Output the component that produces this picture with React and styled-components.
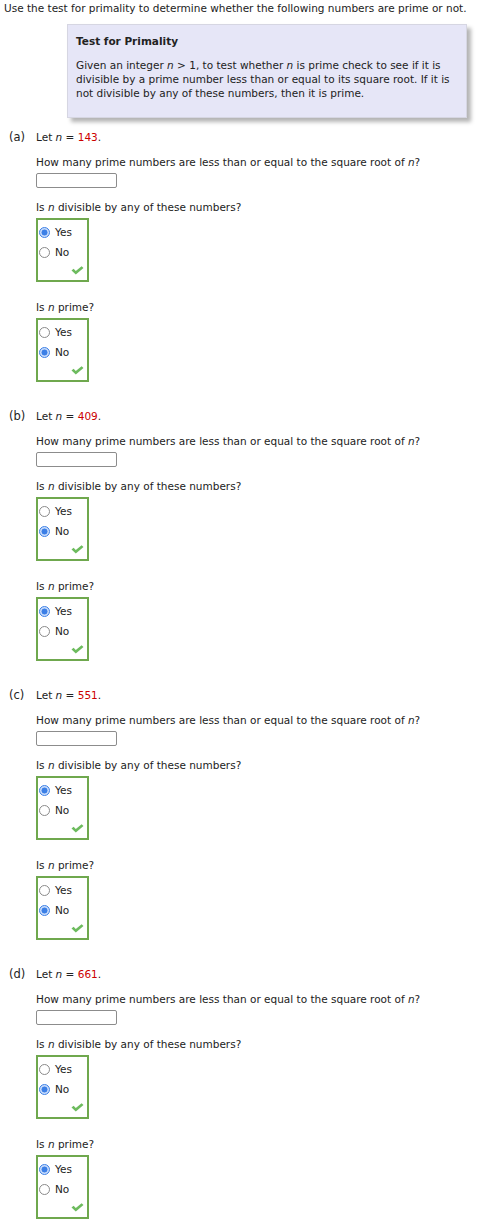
import styled, { createGlobalStyle } from 'styled-components'

const GlobalStyle = createGlobalStyle`
  body {
    margin: 0;
    background: #ffffff;
    color: #222222;
    font-family: 'DejaVu Sans', Verdana, sans-serif;
    font-size: 10.5px;
  }
`

const parts = [
  { label: '(a)', n: 143, divisible: 'Yes', prime: 'No' },
  { label: '(b)', n: 409, divisible: 'No', prime: 'Yes' },
  { label: '(c)', n: 551, divisible: 'Yes', prime: 'No' },
  { label: '(d)', n: 661, divisible: 'No', prime: 'Yes' },
]

const Check = () => (
  <CheckIcon viewBox="0 0 13 9" width="13" height="9">
    <path d="M0.5 4.6 L2.6 2.8 L4.8 5 L10.6 0.3 L12.5 2 L4.8 8.6 Z" fill="#6dbb5e" />
  </CheckIcon>
)

const Choices = ({ value }) => (
  <ChoiceBox>
    {['Yes', 'No'].map((opt) => (
      <Choice key={opt}>
        <Radio $checked={opt === value} />
        {opt}
      </Choice>
    ))}
    <Check />
  </ChoiceBox>
)

const App = () => {
  return (
    <Page>
      <GlobalStyle />
      <Intro>Use the test for primality to determine whether the following numbers are prime or not.</Intro>
      <InfoBox>
        <InfoTitle>Test for Primality</InfoTitle>
        <InfoText>
          Given an integer <Var>n</Var> &gt; 1, to test whether <Var>n</Var> is prime check to see if it is
          divisible by a prime number less than or equal to its square root. If it is not divisible by any
          of these numbers, then it is prime.
        </InfoText>
      </InfoBox>
      {parts.map((p) => (
        <Part key={p.label}>
          <PartLabel>{p.label}</PartLabel>
          <PartBody>
            <Line>
              Let <Var>n</Var> = <Num>{p.n}</Num>.
            </Line>
            <Question $top={11}>
              How many prime numbers are less than or equal to the square root of <Var>n</Var>?
            </Question>
            <Answer />
            <Question $top={12}>
              Is <Var>n</Var> divisible by any of these numbers?
            </Question>
            <Choices value={p.divisible} />
            <Question $top={18}>
              Is <Var>n</Var> prime?
            </Question>
            <Choices value={p.prime} />
          </PartBody>
        </Part>
      ))}
    </Page>
  )
}

export default App

const Page = styled.div`
  padding: 1px 4px 0 4px;
`
const Intro = styled.p`
  margin: 0;
  line-height: 14px;
`
const InfoBox = styled.div`
  margin: 9px 0 0 63px;
  width: 382px;
  background: #e6e6f7;
  border: 1px solid #d6d6e2;
  box-shadow: 4px 4px 4px #b5b5b5;
  padding: 9px 8px 17px 8px;
`
const InfoTitle = styled.div`
  font-weight: bold;
  line-height: 14px;
`
const InfoText = styled.p`
  margin: 10px 0 0 0;
  line-height: 14px;
`
const Var = styled.i`
  font-style: italic;
`
const Num = styled.span`
  color: #cc0000;
`
const Part = styled.div`
  display: grid;
  grid-template-columns: 32px 1fr;
  margin-top: 12px;
  & + & {
    margin-top: 27px;
  }
`
const PartLabel = styled.div`
  padding-left: 5px;
  line-height: 14px;
  font-size: 11.5px;
`
const PartBody = styled.div`
  display: flex;
  flex-direction: column;
  align-items: flex-start;
`
const Line = styled.div`
  line-height: 14px;
`
const Question = styled.div`
  line-height: 14px;
  margin-top: ${(p) => p.$top}px;
`
const Answer = styled.div`
  box-sizing: border-box;
  width: 81px;
  height: 15px;
  margin-top: 4px;
  border: 1px solid #8c8c8c;
  border-radius: 2px;
  background: #ffffff;
`
const ChoiceBox = styled.div`
  position: relative;
  box-sizing: border-box;
  width: 53px;
  height: 64px;
  margin-top: 4px;
  padding: 2px 0 0 1px;
  border: 2px solid #6fa84e;
`
const Choice = styled.div`
  display: flex;
  align-items: center;
  gap: 5px;
  height: 20px;
`
const Radio = styled.span`
  display: inline-block;
  width: 11px;
  height: 11px;
  box-sizing: border-box;
  border-radius: 50%;
  border: 1px solid ${(p) => (p.$checked ? '#3b7fe6' : '#8a8a8a')};
  background: ${(p) =>
    p.$checked ? 'radial-gradient(circle, #3b7fe6 0 2.7px, #c9dcfb 3.3px)' : '#ffffff'};
`
const CheckIcon = styled.svg`
  position: absolute;
  right: 3px;
  bottom: 5px;
`
